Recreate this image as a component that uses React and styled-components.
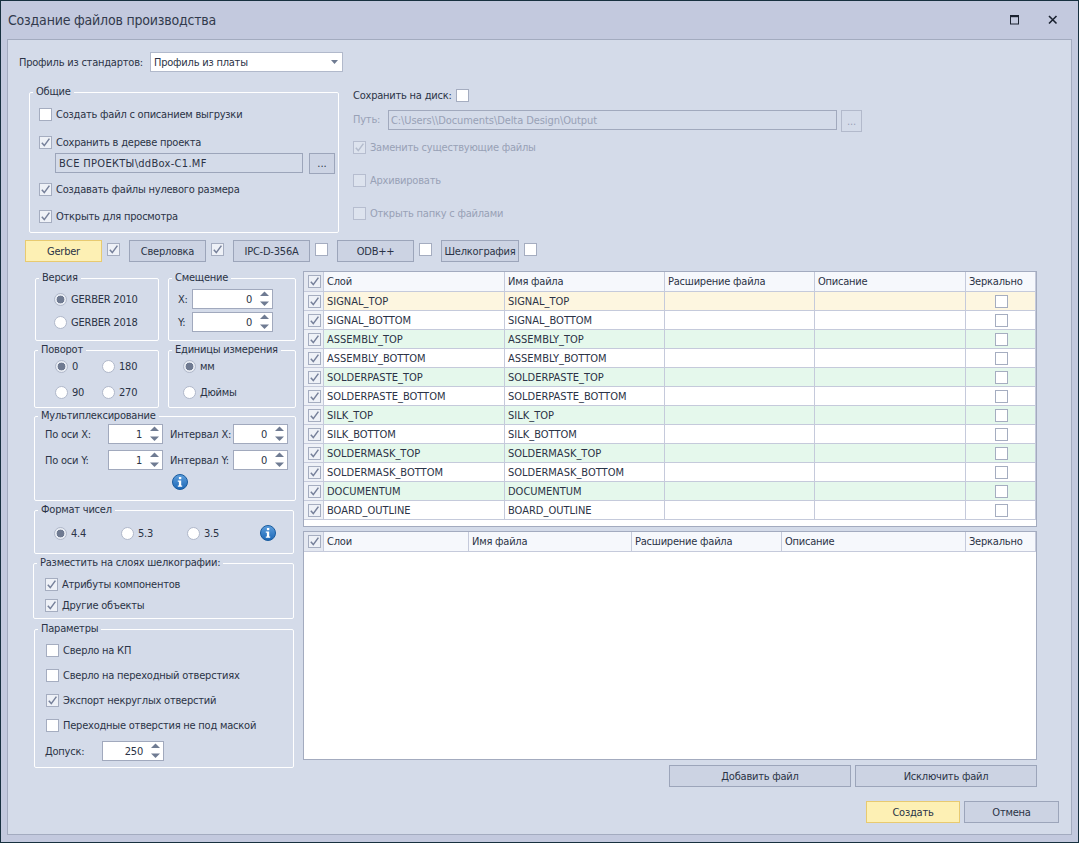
import React from "react";
import styled, { createGlobalStyle } from "styled-components";

const textColor = "#2b3346";
const mutedColor = "#98a1b6";
const lineColor = "#a3abbf";

const layers = [
  "SIGNAL_TOP",
  "SIGNAL_BOTTOM",
  "ASSEMBLY_TOP",
  "ASSEMBLY_BOTTOM",
  "SOLDERPASTE_TOP",
  "SOLDERPASTE_BOTTOM",
  "SILK_TOP",
  "SILK_BOTTOM",
  "SOLDERMASK_TOP",
  "SOLDERMASK_BOTTOM",
  "DOCUMENTUM",
  "BOARD_OUTLINE",
];

const tabs = [
  { name: "Gerber", width: 77, active: true, checked: true },
  { name: "Сверловка", width: 77, checked: true },
  { name: "IPC-D-356A", width: 77 },
  { name: "ODB++", width: 77 },
  { name: "Шелкография", width: 78 },
];

const rowColor = (index) => {
  if (index === 0) return "#fdf6e0";
  return index % 2 === 0 ? "#e5f8ec" : "#ffffff";
};

export default function App() {
  return (
    <>
      <GlobalStyle />
      <Window>
        <TitleBar>
          <Title>Создание файлов производства</Title>
          <WindowButtons>
            <MaxIcon />
            <CloseIcon />
          </WindowButtons>
        </TitleBar>

        <Panel>
          <ProfileRow>
            <ProfileLabel>Профиль из стандартов:</ProfileLabel>
            <Combo>
              Профиль из платы
              <ComboArrow />
            </Combo>
          </ProfileRow>

          <UpperSection>
            <Group $w={310} $h={148}>
              <Legend>Общие</Legend>
              <GroupBody $pad="9px 0 0 9px">
                <CheckLine label="Создать файл с описанием выгрузки" />
                <CheckLine checked top={15} label="Сохранить в дереве проекта" />
                <PathRow $top={4}>
                  <ProjectPath>ВСЕ ПРОЕКТЫ\ddBox-C1.MF</ProjectPath>
                  <DotsButton>...</DotsButton>
                </PathRow>
                <CheckLine checked top={9} label="Создавать файлы нулевого размера" />
                <CheckLine checked top={14} label="Открыть для просмотра" />
              </GroupBody>
            </Group>

            <DiskColumn>
              <DiskHead>
                Сохранить на диск:
                <CheckBox />
              </DiskHead>
              <DiskPath>
                <MutedLabel>Путь:</MutedLabel>
                <DiskInput>C:\Users\\Documents\Delta Design\Output</DiskInput>
                <DisabledDots>...</DisabledDots>
              </DiskPath>
              <CheckLine checked disabled top={9} label="Заменить существующие файлы" />
              <CheckLine disabled top={20} label="Архивировать" />
              <CheckLine disabled top={20} label="Открыть папку с файлами" />
            </DiskColumn>
          </UpperSection>

          <TabsRow>
            {tabs.map((tab) => (
              <TabItem key={tab.name}>
                <TabButton $w={tab.width} $active={tab.active}>
                  {tab.name}
                </TabButton>
                <CheckBox checked={tab.checked} />
              </TabItem>
            ))}
          </TabsRow>

          <MainSection>
            <LeftColumn>
              <HalfGroups>
                <Group $ml={1} $h={70}>
                  <Legend>Версия</Legend>
                  <GroupBody $pad="8px 0 0 18px">
                    <RadioList $gap={10}>
                      <RadioLine on label="GERBER 2010" />
                      <RadioLine label="GERBER 2018" />
                    </RadioList>
                  </GroupBody>
                </Group>
                <Group $h={70}>
                  <Legend>Смещение</Legend>
                  <GroupBody $pad="4px 0 0 9px">
                    <OffsetGrid>
                      <span>X:</span>
                      <Spin value="0" />
                      <span>Y:</span>
                      <Spin value="0" />
                    </OffsetGrid>
                  </GroupBody>
                </Group>
              </HalfGroups>

              <HalfGroups>
                <Group $h={65}>
                  <Legend>Поворот</Legend>
                  <GroupBody $pad="3px 0 0 20px">
                    <RadioGrid>
                      <RadioLine on label="0" />
                      <RadioLine label="180" />
                      <RadioLine label="90" />
                      <RadioLine label="270" />
                    </RadioGrid>
                  </GroupBody>
                </Group>
                <Group $h={65}>
                  <Legend>Единицы измерения</Legend>
                  <GroupBody $pad="3px 0 0 14px">
                    <RadioList $gap={13}>
                      <RadioLine on label="мм" />
                      <RadioLine label="Дюймы" />
                    </RadioList>
                  </GroupBody>
                </Group>
              </HalfGroups>

              <Group $h={92} $top={-1}>
                <Legend>Мультиплексирование</Legend>
                <GroupBody $pad="1px 0 0 10px">
                  <MultiGrid>
                    <span>По оси X:</span>
                    <Spin value="1" />
                    <IntervalLabel>Интервал X:</IntervalLabel>
                    <Spin value="0" />
                    <span>По оси Y:</span>
                    <Spin value="1" />
                    <IntervalLabel>Интервал Y:</IntervalLabel>
                    <Spin value="0" />
                  </MultiGrid>
                  <MultiInfo>
                    <InfoIcon />
                  </MultiInfo>
                </GroupBody>
              </Group>

              <Group $w={260} $h={51}>
                <Legend>Формат чисел</Legend>
                <GroupBody $pad="8px 0 0 19px">
                  <FormatRow>
                    <RadioLine on label="4.4" />
                    <RadioLine label="5.3" />
                    <RadioLine label="3.5" />
                    <InfoIcon />
                  </FormatRow>
                </GroupBody>
              </Group>

              <Group $ml={-1} $w={261} $h={63}>
                <Legend>Разместить на слоях шелкографии:</Legend>
                <GroupBody $pad="8px 0 0 11px">
                  <CheckLine checked label="Атрибуты компонентов" />
                  <CheckLine checked top={8} label="Другие объекты" />
                </GroupBody>
              </Group>

              <Group $w={260} $h={146} $top={1}>
                <Legend>Параметры</Legend>
                <GroupBody $pad="8px 0 0 11px">
                  <CheckLine label="Сверло на КП" />
                  <CheckLine top={12} label="Сверло на переходный отверстиях" />
                  <CheckLine checked top={12} label="Экспорт некруглых отверстий" />
                  <CheckLine top={12} label="Переходные отверстия не под маской" />
                  <ToleranceRow>
                    <span>Допуск:</span>
                    <Spin value="250" />
                  </ToleranceRow>
                </GroupBody>
              </Group>
            </LeftColumn>

            <RightColumn>
              <TableFrame $h={256}>
                <LayerTable>
                  <TableHead first="Слой" widths={[20, 181, 160, 150, 151, 70]} />
                  <tbody>
                    {layers.map((layer, index) => (
                      <tr key={layer}>
                        <CheckCell>
                          <CellInner>
                            <CheckBox checked />
                          </CellInner>
                        </CheckCell>
                        <DataCell $bg={rowColor(index)}>{layer}</DataCell>
                        <DataCell $bg={rowColor(index)}>{layer}</DataCell>
                        <DataCell $bg={rowColor(index)} />
                        <DataCell $bg={rowColor(index)} />
                        <DataCell $bg={rowColor(index)}>
                          <CellInner>
                            <CheckBox />
                          </CellInner>
                        </DataCell>
                      </tr>
                    ))}
                  </tbody>
                </LayerTable>
              </TableFrame>

              <TableFrame $h={229} $top={4}>
                <LayerTable>
                  <TableHead first="Слои" widths={[20, 145, 163, 150, 184, 70]} />
                </LayerTable>
              </TableFrame>

              <FileButtons>
                <FileButton>Добавить файл</FileButton>
                <FileButton>Исключить файл</FileButton>
              </FileButtons>
            </RightColumn>
          </MainSection>

          <Footer>
            <DialogButton $primary>Создать</DialogButton>
            <DialogButton>Отмена</DialogButton>
          </Footer>
        </Panel>
      </Window>
    </>
  );
}

const TableHead = ({ first, widths }) => (
  <thead>
    <tr>
      <HeadCheckCell $w={widths[0]}>
        <CellInner>
          <CheckBox checked />
        </CellInner>
      </HeadCheckCell>
      <HeadCell $w={widths[1]}>{first}</HeadCell>
      <HeadCell $w={widths[2]}>Имя файла</HeadCell>
      <HeadCell $w={widths[3]}>Расширение файла</HeadCell>
      <HeadCell $w={widths[4]}>Описание</HeadCell>
      <HeadCell $w={widths[5]}>Зеркально</HeadCell>
    </tr>
  </thead>
);

const CheckBox = ({ checked, disabled }) => (
  <Box $checked={checked} $disabled={disabled}>
    {checked && (
      <svg width="11" height="11" viewBox="0 0 11 11" fill="none">
        <path
          d="M1.8 5.8 L4.3 8.6 L9.4 1.6"
          stroke={disabled ? "#b4bccd" : "#76809a"}
          strokeWidth="1.5"
        />
      </svg>
    )}
  </Box>
);

const CheckLine = ({ checked, disabled, top, label }) => (
  <Line $top={top} $disabled={disabled}>
    <CheckBox checked={checked} disabled={disabled} />
    <span>{label}</span>
  </Line>
);

const RadioLine = ({ on, label }) => (
  <Line>
    <Radio $on={on} />
    <span>{label}</span>
  </Line>
);

const Spin = ({ value }) => (
  <SpinBox>
    <SpinValue>{value}</SpinValue>
    <SpinArrows>
      <svg width="9" height="16" viewBox="0 0 9 16">
        <path d="M4.5 0.5 L9 5 H0 Z" fill="#6f7b92" />
        <path d="M0 10.5 H9 L4.5 15 Z" fill="#6f7b92" />
      </svg>
    </SpinArrows>
  </SpinBox>
);

const InfoIcon = () => (
  <svg width="16" height="16" viewBox="0 0 16 16">
    <defs>
      <linearGradient id="infoFill" x1="0" y1="0" x2="0" y2="1">
        <stop offset="0" stopColor="#5fa0de" />
        <stop offset="1" stopColor="#1b66b5" />
      </linearGradient>
    </defs>
    <circle cx="8" cy="8" r="7.5" fill="url(#infoFill)" stroke="#1a5c9f" />
    <rect x="6.9" y="3" width="2.4" height="2.2" fill="#ffffff" />
    <path d="M5.8 6.4 H9.2 V11.4 H10.2 V12.8 H5.8 V11.4 H6.9 V7.8 H5.8 Z" fill="#ffffff" />
  </svg>
);

const MaxIcon = () => (
  <svg width="10" height="10" viewBox="0 0 10 10">
    <rect x="0.5" y="1" width="8" height="8" fill="none" stroke="#1b2230" />
    <rect x="0" y="0" width="9" height="2.2" fill="#1b2230" />
  </svg>
);

const CloseIcon = () => (
  <svg width="10" height="10" viewBox="0 0 10 10">
    <path d="M1 1 L8.5 8.5 M8.5 1 L1 8.5" stroke="#1b2230" strokeWidth="1.6" fill="none" />
  </svg>
);

const ComboArrow = () => (
  <ArrowWrap>
    <svg width="7" height="4" viewBox="0 0 7 4">
      <path d="M0 0 H7 L3.5 4 Z" fill="#6f7b92" />
    </svg>
  </ArrowWrap>
);

const GlobalStyle = createGlobalStyle`
  html, body {
    margin: 0;
    padding: 0;
    background: #c3c9de;
  }
  body {
    font-family: "DejaVu Sans Condensed", "DejaVu Sans", "Liberation Sans", sans-serif;
    font-stretch: condensed;
    font-size: 11px;
    line-height: 13px;
    letter-spacing: -0.22px;
    color: ${textColor};
  }
  * {
    box-sizing: border-box;
  }
`;

const Window = styled.div`
  width: 1079px;
  height: 843px;
  display: flex;
  flex-direction: column;
  padding: 0 6px 7px;
  background: #c3c9de;
  border: 1px solid #17303f;
`;

const TitleBar = styled.div`
  height: 38px;
  flex: none;
  display: flex;
  align-items: center;
  justify-content: space-between;
  padding: 0 14px 0 1px;
`;

const Title = styled.div`
  font-size: 14px;
  line-height: 18px;
  letter-spacing: -0.2px;
  color: #323a4c;
`;

const WindowButtons = styled.div`
  display: flex;
  align-items: center;
  gap: 28px;
`;

const Panel = styled.div`
  flex: 1;
  display: flex;
  flex-direction: column;
  background: #d4dbe9;
  border: 1px solid ${lineColor};
`;

const ProfileRow = styled.div`
  display: flex;
  align-items: center;
  padding: 12px 0 0 11px;
`;

const ProfileLabel = styled.span`
  width: 131px;
`;

const Combo = styled.div`
  position: relative;
  width: 193px;
  height: 20px;
  display: flex;
  align-items: center;
  padding-left: 3px;
  background: #ffffff;
  border: 1px solid #b1b9cb;
`;

const ArrowWrap = styled.span`
  position: absolute;
  right: 4px;
  top: 7px;
  display: flex;
`;

const UpperSection = styled.div`
  display: flex;
  gap: 14px;
  margin: 13px 0 0 21px;
`;

const Group = styled.fieldset`
  margin: ${({ $top }) => $top || 0}px 0 0 ${({ $ml }) => $ml || 0}px;
  min-width: 0;
  width: ${({ $w }) => ($w ? `${$w}px` : "auto")};
  height: ${({ $h }) => $h}px;
  padding: 0;
  border: 1px solid #ffffff;
  border-radius: 2px;
`;

const GroupBody = styled.div`
  padding: ${({ $pad }) => $pad};
`;

const Legend = styled.legend`
  margin-left: 3px;
  padding: 0 3px;
  font-size: 11px;
  line-height: 14px;
  white-space: nowrap;
`;

const Line = styled.div`
  display: flex;
  align-items: center;
  gap: 4px;
  height: 13px;
  margin-top: ${({ $top }) => $top || 0}px;
  color: ${({ $disabled }) => ($disabled ? mutedColor : textColor)};
  white-space: nowrap;
`;

const Box = styled.span`
  flex: none;
  width: 13px;
  height: 13px;
  display: inline-flex;
  align-items: center;
  justify-content: center;
  border: 1px solid ${({ $disabled }) => ($disabled ? "#b6bdcf" : "#a5adc0")};
  background: ${({ $checked, $disabled }) => {
    if ($disabled) return "#dde3ee";
    return $checked ? "#eef1f7" : "#ffffff";
  }};
`;

const Radio = styled.span`
  flex: none;
  width: 13px;
  height: 13px;
  border-radius: 50%;
  border: 1px solid #b0b8ca;
  background: ${({ $on }) =>
    $on ? "radial-gradient(circle, #6f7a91 0 3.6px, #e8ecf3 4.2px)" : "#ffffff"};
`;

const PathRow = styled.div`
  display: flex;
  gap: 6px;
  margin: ${({ $top }) => $top}px 0 0 16px;
`;

const ProjectPath = styled.div`
  width: 248px;
  height: 20px;
  display: flex;
  align-items: center;
  padding-left: 3px;
  letter-spacing: 0.3px;
  border: 1px solid #9ca5ba;
  background: #d4dbe9;
`;

const DotsButton = styled.button`
  width: 26px;
  height: 21px;
  padding: 0;
  font: inherit;
  color: ${textColor};
  background: #cdd4e4;
  border: 1px solid #9ca5ba;
`;

const DiskColumn = styled.div`
  display: flex;
  flex-direction: column;
  padding-top: 4px;
`;

const DiskHead = styled.div`
  display: flex;
  align-items: center;
  gap: 4px;
`;

const DiskPath = styled.div`
  display: flex;
  align-items: flex-start;
  margin-top: 8px;
`;

const MutedLabel = styled.span`
  width: 35px;
  line-height: 20px;
  color: ${mutedColor};
`;

const DiskInput = styled.div`
  width: 449px;
  height: 20px;
  display: flex;
  align-items: center;
  padding-left: 2px;
  letter-spacing: -0.08px;
  color: ${mutedColor};
  border: 1px solid #a1a9bd;
`;

const DisabledDots = styled.div`
  width: 21px;
  height: 22px;
  margin-left: 4px;
  text-align: center;
  line-height: 22px;
  color: ${mutedColor};
  border: 1px solid #b2b9cb;
`;

const TabsRow = styled.div`
  display: flex;
  gap: 9px;
  margin: 7px 0 0 17px;
`;

const TabItem = styled.div`
  display: flex;
  gap: 5px;
`;

const TabButton = styled.div`
  width: ${({ $w }) => $w}px;
  height: 22px;
  display: flex;
  align-items: center;
  justify-content: center;
  background: ${({ $active }) => ($active ? "#fdf0b4" : "#ccd3e3")};
  border: 1px solid ${({ $active }) => ($active ? "#e8ca70" : "#9ca5ba")};

  & + span {
    margin-top: 3px;
  }
`;

const MainSection = styled.div`
  display: flex;
  gap: 7px;
  margin: 9px 0 0 26px;
  height: 516px;
`;

const LeftColumn = styled.div`
  width: 262px;
  flex: none;
  display: flex;
  flex-direction: column;
  gap: 2px;
`;

const HalfGroups = styled.div`
  display: grid;
  grid-template-columns: 125px 128px;
  column-gap: 9px;
`;

const RadioList = styled.div`
  display: flex;
  flex-direction: column;
  gap: ${({ $gap }) => $gap}px;
`;

const RadioGrid = styled.div`
  display: grid;
  grid-template-columns: 47px 47px;
  row-gap: 13px;
`;

const OffsetGrid = styled.div`
  display: grid;
  grid-template-columns: 14px 81px;
  align-items: center;
  row-gap: 3px;
`;

const MultiGrid = styled.div`
  display: grid;
  grid-template-columns: 63px 55px 70px 55px;
  align-items: center;
  row-gap: 6px;
`;

const IntervalLabel = styled.span`
  margin-left: 7px;
  white-space: nowrap;
`;

const MultiInfo = styled.div`
  display: flex;
  padding: 4px 0 0 127px;
`;

const FormatRow = styled.div`
  display: grid;
  grid-template-columns: 67px 66px 73px 16px;
  align-items: center;
  height: 16px;
`;

const ToleranceRow = styled.div`
  display: grid;
  grid-template-columns: 57px 62px;
  align-items: center;
  margin: 9px 0 0 -1px;
`;

const SpinBox = styled.div`
  height: 20px;
  display: flex;
  align-items: center;
  justify-content: flex-end;
  background: #ffffff;
  border: 1px solid #a1a9bd;
`;

const SpinValue = styled.span`
  padding-right: 8px;
`;

const SpinArrows = styled.span`
  display: flex;
  padding-right: 3px;
`;

const RightColumn = styled.div`
  width: 734px;
  flex: none;
  display: flex;
  flex-direction: column;
`;

const TableFrame = styled.div`
  height: ${({ $h }) => $h}px;
  margin-top: ${({ $top }) => $top || 0}px;
  background: #ffffff;
  border: 1px solid ${lineColor};
`;

const LayerTable = styled.table`
  width: 732px;
  table-layout: fixed;
  border-collapse: separate;
  border-spacing: 0;
`;

const FileButtons = styled.div`
  display: flex;
  justify-content: flex-end;
  gap: 4px;
  margin-top: 5px;
`;

const FileButton = styled.div`
  width: 182px;
  height: 22px;
  display: flex;
  align-items: center;
  justify-content: center;
  background: #ccd3e3;
  border: 1px solid #9ca5ba;
`;

const Footer = styled.div`
  display: flex;
  justify-content: flex-end;
  gap: 4px;
  margin-top: 14px;
  padding-right: 12px;
`;

const DialogButton = styled.div`
  width: ${({ $primary }) => ($primary ? 94 : 95)}px;
  height: 22px;
  display: flex;
  align-items: center;
  justify-content: center;
  background: ${({ $primary }) => ($primary ? "#fdf0b4" : "#ccd3e3")};
  border: 1px solid ${({ $primary }) => ($primary ? "#e8ca70" : "#9ca5ba")};
`;

const CellInner = styled.div`
  display: flex;
  align-items: center;
  justify-content: center;
  padding-left: 2px;
`;

const cellBase = `
  height: 19px;
  padding: 0 3px;
  border-right: 1px solid #c5cadb;
  border-bottom: 1px solid #c5cadb;
  white-space: nowrap;
  overflow: hidden;
`;

const HeadCell = styled.th`
  ${cellBase}
  width: ${({ $w }) => $w}px;
  height: 20px;
  font-weight: normal;
  text-align: left;
  background: #f6f8fc;
`;

const HeadCheckCell = styled.th`
  ${cellBase}
  width: ${({ $w }) => $w}px;
  height: 20px;
  padding: 0;
  background: #e4e8f1;
`;

const CheckCell = styled.td`
  ${cellBase}
  padding: 0;
  background: #eef1f7;
`;

const DataCell = styled.td`
  ${cellBase}
  letter-spacing: 0;
  background: ${({ $bg }) => $bg};
`;
